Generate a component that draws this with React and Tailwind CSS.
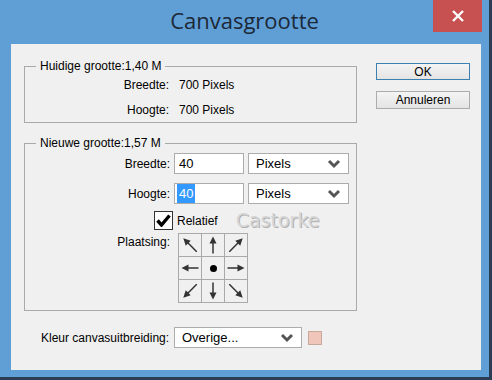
import React from "react"

// small chevron used in the dropdowns
const Chevron = () => (
  <svg width="14" height="10" viewBox="0 0 14 10">
    <polyline points="2,2 7,7 12,2" fill="none" stroke="#555" strokeWidth="3" />
  </svg>
)

const Select = ({ value, w }) => (
  <div className={`${w} h-[21px] flex items-center justify-between bg-white border border-[#acacac] pl-[7px] pr-[7px] text-[13px]`}>
    <span>{value}</span>
    <Chevron />
  </div>
)

// arrow pointing right, rotated for each cell
const Arrow = ({ deg, len = 16 }) => (
  <svg width="22" height="22" viewBox="0 0 22 22" style={{ transform: `rotate(${deg}deg)` }}>
    <line x1={11 - len / 2} y1="11" x2={11 + len / 2 - 5} y2="11" stroke="#333" strokeWidth="1.5" />
    <polygon points={`${11 + len / 2},11 ${11 + len / 2 - 7},7.5 ${11 + len / 2 - 7},14.5`} fill="#333" />
  </svg>
)

const anchors = [225, 270, 315, 180, null, 0, 135, 90, 45]

export default function App() {
  return (
    <div className="w-[492px] h-[380px] bg-[#5f9fd6] border-r-[3px] border-b-[3px] border-[#2b3d52] flex flex-col font-['Liberation_Sans',sans-serif] text-[12px] text-black">
      {/* title bar */}
      <div className="h-[44px] flex relative">
        <div className="flex-1 flex items-center justify-center pb-[4px] text-[22px] text-[#1c2838] font-['Open_Sans',sans-serif]">
          Canvasgrootte
        </div>
        <div className="absolute right-[7px] top-0 w-[49px] h-[32px] bg-[#c75050] flex items-center justify-center">
          <svg width="14" height="14" viewBox="0 0 14 14">
            <path d="M2 2 L12 12 M12 2 L2 12" stroke="white" strokeWidth="2.4" />
          </svg>
        </div>
      </div>

      {/* client area */}
      <div className="ml-[11px] w-[470px] h-[326px] bg-[#f0f0f0] relative flex flex-col pl-[13px] pt-[13px]">
        <div className="flex">
          <div className="flex flex-col w-[333px]">
            <fieldset className="border border-[#a9a9a9] h-[66px]">
              <legend className="ml-[11px] px-[4px]">Huidige grootte:1,40 M</legend>
              <div className="grid grid-cols-[144px_1fr] gap-x-[10px] gap-y-[7px] mt-[1px]">
                <span className="text-right">Breedte:</span>
                <span>700 Pixels</span>
                <span className="text-right">Hoogte:</span>
                <span>700 Pixels</span>
              </div>
            </fieldset>

            <fieldset className="border border-[#a9a9a9] h-[177px] mt-[11px]">
              <legend className="ml-[11px] px-[4px]">Nieuwe grootte:1,57 M</legend>
              <div className="grid grid-cols-[145px_1fr] gap-x-[4px] items-center mt-[1px]">
                <span className="text-right">Breedte:</span>
                <div className="flex gap-[4px]">
                  <div className="w-[70px] h-[21px] bg-white border border-[#acacac] flex items-center pl-[4px] text-[13px]">40</div>
                  <Select value="Pixels" w="w-[101px]" />
                </div>
                <span className="text-right mt-[9px]">Hoogte:</span>
                <div className="flex gap-[4px] mt-[9px]">
                  <div className="w-[70px] h-[21px] bg-white border border-[#acacac] flex items-center pl-[2px] text-[13px]">
                    <span className="bg-[#3399ff] text-white px-[2px]">40</span>
                  </div>
                  <Select value="Pixels" w="w-[101px]" />
                </div>
              </div>
              <div className="flex items-center ml-[129px] mt-[7px]">
                <div className="w-[19px] h-[19px] bg-white border border-[#333] flex items-center justify-center">
                  <svg width="15" height="13" viewBox="0 0 15 13">
                    <polyline points="1.5,6.5 5.5,11 13.5,1.5" fill="none" stroke="#000" strokeWidth="3.4" />
                  </svg>
                </div>
                <span className="ml-[4px]">Relatief</span>
                <span className="ml-[18px] text-[19px] leading-none text-[#d6d6d6] font-['DejaVu_Sans',sans-serif] [text-shadow:1px_1px_0_#b0b0b0]">Castorke</span>
              </div>
              <div className="flex mt-[3px]">
                <span className="w-[145px] text-right">Plaatsing:</span>
                <div className="ml-[8px] grid grid-cols-[repeat(3,23px)] border-l border-t border-[#a9a9a9]">
                  {anchors.map((a, i) => (
                    <div key={i} className="w-[23px] h-[23px] border-r border-b border-[#a9a9a9] flex items-center justify-center">
                      {a === null ? (
                        <div className="w-[7px] h-[7px] rounded-full bg-black" />
                      ) : (
                        <Arrow deg={a} len={a % 90 === 0 ? 17 : 19} />
                      )}
                    </div>
                  ))}
                </div>
              </div>
            </fieldset>
          </div>

          <div className="ml-[19px] mt-[6px] flex flex-col gap-[11px]">
            <div className="w-[94px] h-[17px] border border-[#3c7fb1] bg-gradient-to-b from-[#f4f4f4] to-[#e4e4e4] flex items-center justify-center">OK</div>
            <div className="w-[94px] h-[18px] border border-[#acacac] bg-gradient-to-b from-[#f4f4f4] to-[#e4e4e4] flex items-center justify-center">Annuleren</div>
          </div>
        </div>

        <div className="flex items-center mt-[16px]">
          <span className="w-[150px] pl-[17px]">Kleur canvasuitbreiding:</span>
          <Select value="Overige..." w="w-[128px]" />
          <div className="ml-[6px] w-[14px] h-[14px] bg-[#efc6b9] border border-[#c8a89c]" />
        </div>
      </div>
    </div>
  )
}
